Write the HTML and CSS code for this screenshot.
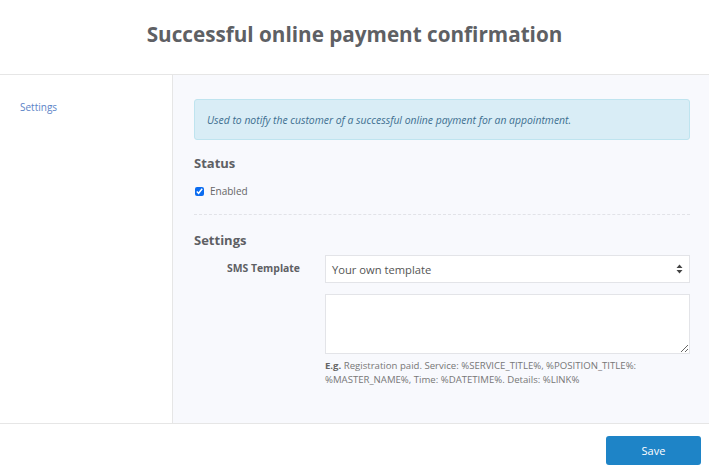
FILE: index.html
```html
<!DOCTYPE html>
<html>
<head>
<meta charset="utf-8">
<link rel="stylesheet" href="styles.css">
</head>
<body>
<div class="page">
  <header class="head">
    <h1 class="title">Successful online payment confirmation</h1>
  </header>
  <div class="main">
    <aside class="side">
      <a class="side-link">Settings</a>
    </aside>
    <section class="content">
      <div class="alert">Used to notify the customer of a successful online payment for an appointment.</div>
      <h2 class="sec-title">Status</h2>
      <label class="check">
        <input type="checkbox" checked>
        <span>Enabled</span>
      </label>
      <div class="divider"></div>
      <h2 class="sec-title sec-settings">Settings</h2>
      <div class="row">
        <div class="label">SMS Template</div>
        <div class="field">
          <div class="select">
            <span>Your own template</span>
            <svg class="arrows" width="7" height="10" viewBox="0 0 7 10"><path d="M3.5 0.5 L6.5 4 L0.5 4 Z M3.5 9.5 L6.5 6 L0.5 6 Z" fill="#444"/></svg>
          </div>
          <textarea class="area"></textarea>
          <p class="help"><b>E.g.</b> Registration paid. Service: %SERVICE_TITLE%, %POSITION_TITLE%: %MASTER_NAME%, Time: %DATETIME%. Details: %LINK%</p>
        </div>
      </div>
    </section>
  </div>
  <footer class="foot">
    <button class="save">Save</button>
  </footer>
</div>
</body>
</html>
```
FILE: styles.css
```css
* { box-sizing: border-box; }
html, body { margin: 0; padding: 0; background: #fff; }
body { font-family: "Open Sans", "Liberation Sans", sans-serif; width: 709px; height: 473px; overflow: hidden; }
.page { display: flex; flex-direction: column; height: 473px; }
.head { height: 75px; border-bottom: 1px solid #e6e6e6; display: flex; align-items: center; justify-content: center; }
.title { margin: 0; font-size: 20.7px; font-weight: 700; color: #5e6064; letter-spacing: 0; padding-bottom: 6px; }
.main { display: flex; height: 349px; border-bottom: 1px solid #e6e6e6; }
.side { width: 173px; border-right: 1px solid #e6e6e6; padding: 19px 0 0 20px; }
.side-link { font-size: 10px; color: #5b83c7; }
.content { flex: 1; background: #f8f9fd; padding: 24px 19px 0 21px; }
.alert { height: 41px; background: #d9edf6; border: 1px solid #bfe4ef; border-radius: 3px; padding: 0 12px; display: flex; align-items: center; font-size: 10.4px; font-style: italic; color: #3d6f90; }
.sec-title { margin: 0; font-size: 13px; font-weight: 700; color: #5e6064; }
.alert + .sec-title { margin-top: 14px; }
.check { display: flex; align-items: center; margin-top: 12px; font-size: 10px; color: #666; }
.check input { margin: 0 6px 0 1px; width: 9px; height: 9px; accent-color: #0b6cf0; }
.divider { border-top: 1px dashed #e2e3e8; margin-top: 16px; }
.sec-settings { margin-top: 16px; }
.row { display: flex; margin-top: 6px; }
.label { width: 131px; text-align: right; padding-right: 25px; font-size: 10.4px; font-weight: 700; color: #5e6064; line-height: 27px; }
.field { flex: 1; }
.select { height: 28px; background: #fff; border: 1px solid #e3e4e8; display: flex; align-items: center; justify-content: space-between; padding: 0 6px 0 6px; font-size: 11.2px; color: #555; }
.arrows { display: block; }
.area { display: block; width: 100%; height: 60px; margin: 11px 0 0; border: 1px solid #e3e4e8; background: #fff; resize: vertical; }
.help { margin: 5px 0 0; font-size: 9.6px; line-height: 14px; color: #777; }
.help b { color: #666; }
.foot { flex: 1; display: flex; justify-content: flex-end; align-items: flex-start; padding: 12px 8px 0 0; }
.save { width: 95px; height: 29px; border: none; border-radius: 3px; background: #1e84c7; color: #fff; font-family: "Open Sans", sans-serif; font-size: 11px; }
```
